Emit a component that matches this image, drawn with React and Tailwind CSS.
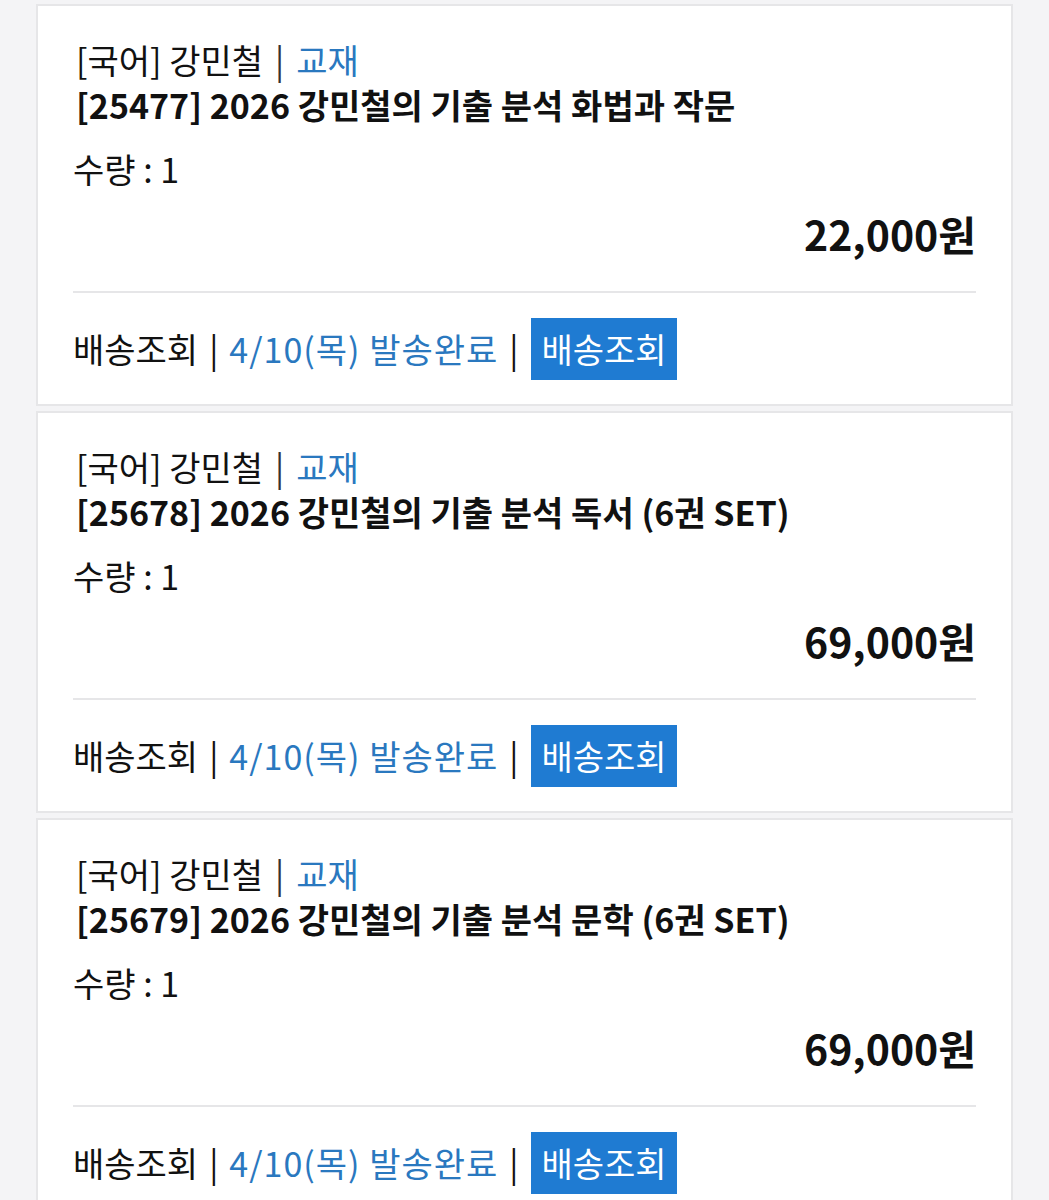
export default function App() {
  const items = [
    { code: "25477", name: "2026 강민철의 기출 분석 화법과 작문", price: "22,000" },
    { code: "25678", name: "2026 강민철의 기출 분석 독서 (6권 SET)", price: "69,000" },
    { code: "25679", name: "2026 강민철의 기출 분석 문학 (6권 SET)", price: "69,000" },
  ];
  return (
    <div
      className="min-h-[1200px] w-[1049px] bg-[#f4f4f6] pt-[4px] flex flex-col gap-[5px]"
      style={{ fontFamily: '"Noto Sans CJK KR", "Noto Sans", sans-serif' }}
    >
      {items.map((it) => (
        <div
          key={it.code}
          className="ml-[36px] w-[977px] bg-white border-2 border-[#e6e6e8] pl-[35px] pr-[35px] pt-[31px] pb-[24px] text-[#111]"
        >
          <div className="pl-[3px] text-[34px] leading-[45px] flex items-center">
            <span>[국어] 강민철</span>
            <span className="mx-[12px] text-[#333]">|</span>
            <span className="text-[#2a78bf]">교재</span>
          </div>
          <div className="pl-[3px] text-[34px] leading-[45px] font-bold">
            [{it.code}] {it.name}
          </div>
          <div className="mt-[19px] text-[34px] leading-[45px]">수량 : 1</div>
          <div className="mt-[17px] text-right text-[41px] leading-[50px] font-bold">
            {it.price}원
          </div>
          <div className="mt-[33px] h-[2px] bg-[#e6e6e8]" />
          <div className="mt-[25px] flex items-center text-[34px] leading-[62px]">
            <span>배송조회</span>
            <span className="mx-[11px]">|</span>
            <span className="text-[#2a78bf] tracking-[1px]">4/10(목) 발송완료</span>
            <span className="mx-[11px]">|</span>
            <span className="ml-[2px] bg-[#1f7bd2] text-white px-[10px] h-[62px]">배송조회</span>
          </div>
        </div>
      ))}
    </div>
  );
}
